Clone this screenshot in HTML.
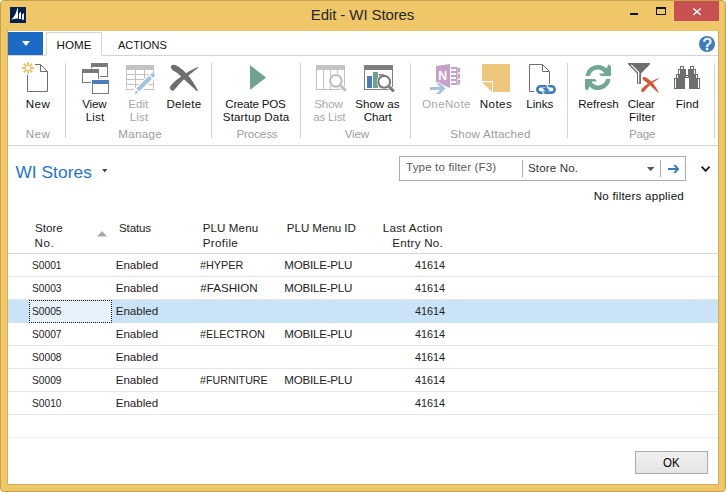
<!DOCTYPE html>
<html><head><meta charset="utf-8"><title>Edit - WI Stores</title>
<style>
html,body{margin:0;padding:0;}
body{width:726px;height:492px;overflow:hidden;background:#fff;font-family:"Liberation Sans",sans-serif;font-size:11.6px;color:#000;position:relative;}
.abs{position:absolute;}
#frame{position:absolute;left:0;top:0;width:724px;height:490px;border:1px solid #C7A24C;background:#EFC768;border-radius:4px;}
#client{position:absolute;left:7px;top:30px;width:710px;height:453px;background:#fff;border:1px solid #D2AE58;border-top-color:#E8C46A;}
.t{position:absolute;white-space:nowrap;line-height:14px;font-size:11.6px;}
.sep{position:absolute;top:63px;width:1px;height:75px;background:#D4D4D4;}
</style></head><body>
<div id="frame"></div>
<div class="abs" style="left:724px;top:3px;width:1px;height:485px;background:#DDB75C"></div>
<div id="client"></div>
<!-- title bar -->
<svg class="abs" style="left:10px;top:7px" width="16" height="16" viewBox="0 0 16 16"><rect width="16" height="16" fill="#00204F"/><path d="M1 12.8 C4 10.5 6.3 6 7.4 1 L7.9 1 L8.1 11.4 C5.5 11.4 3 12 1 12.8 Z M9 12 L9 6.7 L10.4 5.1 L11 5.1 L11 12 Z M12 12.8 L12 8 L13.3 6.3 L13.9 6.3 L13.9 12.8 Z" fill="#fff"/></svg>
<div class="abs" style="left:630px;top:13px;width:8px;height:2px;background:#111"></div>
<div class="abs" style="left:656px;top:7px;width:8px;height:5px;border:1px solid #111;border-top-width:2px"></div>
<div class="abs" style="left:674px;top:1px;width:45px;height:20px;background:#C75050"></div>
<svg class="abs" style="left:691px;top:6px" width="12" height="12" viewBox="0 0 12 12"><path d="M2.3 2.5 L9.7 9 M9.7 2.5 L2.3 9" stroke="#fff" stroke-width="1.5" fill="none"/></svg>
<!-- tabs -->
<div class="abs" style="left:8px;top:32px;width:35px;height:23px;background:#1B6AC6"></div>
<svg class="abs" style="left:22px;top:41px" width="8" height="5" viewBox="0 0 8 5"><path d="M0 0 L8 0 L4 5 Z" fill="#fff"/></svg>
<div class="abs" style="left:8px;top:55px;width:710px;height:1px;background:#D4D4D4"></div>
<div class="abs" style="left:46px;top:32px;width:54px;height:22px;border:1px solid #D4D4D4;border-bottom:1px solid #fff;background:#fff"></div>
<svg class="abs" style="left:699px;top:36px" width="16" height="16" viewBox="0 0 16 16"><circle cx="8" cy="8" r="8" fill="#3F7BBF"/><text x="8.1" y="13.5" text-anchor="middle" font-family="Liberation Sans, sans-serif" font-size="16" fill="#fff" stroke="#fff" stroke-width="0.5">?</text></svg>
<!-- ribbon -->
<div class="abs" style="left:8px;top:145px;width:710px;height:1px;background:#D4D4D4"></div>
<div class="sep" style="left:65px"></div>
<div class="sep" style="left:211px"></div>
<div class="sep" style="left:300px"></div>
<div class="sep" style="left:410px"></div>
<div class="sep" style="left:567px"></div>
<div class="sep" style="left:714px"></div>
<!-- ribbon icons -->
<svg class="abs" style="left:0;top:56px" width="726" height="44" viewBox="0 56 726 44" shape-rendering="auto">
<!-- New -->
<path d="M35 64.5 H40.5 L47.5 71.5 V91.5 H27.5 V75" fill="none" stroke="#6E6E6E" stroke-width="1"/>
<path d="M40.5 64.5 V71.5 H47.5" fill="none" stroke="#6E6E6E" stroke-width="1"/>
<g stroke="#EEC56F" stroke-width="2" fill="none">
<path d="M28 62 V66 M28 70 V74 M22 68 H26 M30 68 H34 M23.8 63.8 L26.6 66.6 M29.4 69.4 L32.2 72.2 M32.2 63.8 L29.4 66.6 M26.6 69.4 L23.8 72.2"/>
</g>
<!-- View List -->
<g fill="#7A7A7A">
<rect x="91" y="63" width="17" height="4"/><rect x="91" y="63" width="1" height="5.5"/><rect x="107" y="63" width="1" height="14"/><rect x="100" y="76" width="8" height="1"/>
<rect x="82" y="69" width="17" height="4"/><rect x="82" y="69" width="1" height="14"/><rect x="82" y="82" width="9" height="1"/><rect x="98" y="69" width="1" height="10"/>
<rect x="92" y="80" width="1" height="14"/><rect x="108" y="80" width="1" height="14"/><rect x="92" y="93" width="17" height="1"/>
</g>
<rect x="92" y="80" width="17" height="4" fill="#4A7EBB"/>
<!-- Edit List -->
<g fill="#C2C2C2">
<rect x="126" y="65" width="28" height="5"/>
<rect x="126" y="65" width="1" height="25"/><rect x="135" y="65" width="1" height="25"/><rect x="144" y="65" width="1" height="25"/><rect x="153" y="65" width="1" height="25"/>
<rect x="126" y="74" width="28" height="1"/><rect x="126" y="79" width="28" height="1"/><rect x="126" y="84" width="28" height="1"/><rect x="126" y="89" width="28" height="1"/>
</g>
<path d="M134.2 94.2 L152.5 75.5" stroke="#fff" stroke-width="7" fill="none"/>
<path d="M134.6 94 L136 90.2 L138.4 92.6 Z" fill="#A6C3E0"/>
<path d="M137.8 90 L150.6 77.2" stroke="#A6C3E0" stroke-width="4.2" fill="none"/>
<path d="M151.5 76.3 L153.8 74" stroke="#A6C3E0" stroke-width="4.2" fill="none"/>
<!-- Delete -->
<path d="M171 67.2 C170.6 64.6 174 64 177 65.8 C184 70 190.5 76.5 198 90.6 C197.6 91 197 91 196.4 90.7 L177 72.8 C174 71 171.3 70 171 67.2 Z" fill="#6E6E6E"/>
<path d="M170.1 88.6 C169.6 87.6 169.9 86.9 170.4 86.2 C173.4 82 177.6 78.7 182.8 75.5 C187.5 72.3 192.5 69.4 198.3 67.1 L198.3 68.1 C193.8 71 189.8 74.6 184.3 78.9 C180.3 82.6 177.6 86 174.2 89.9 C173 91.3 170.8 91 170.1 88.6 Z" fill="#6E6E6E"/>
<!-- Play -->
<path d="M250 65 L266 77.5 L250 90 Z" fill="#6FA391"/>
<!-- Show as List -->
<g fill="#C4C4C4">
<rect x="316" y="65" width="29" height="5"/>
<rect x="316" y="65" width="1" height="25"/><rect x="323" y="65" width="1" height="25"/><rect x="330" y="65" width="1" height="25"/><rect x="337" y="65" width="1" height="25"/><rect x="344" y="65" width="1" height="25"/>
<rect x="316" y="89" width="29" height="1"/>
</g>
<circle cx="335.8" cy="80.8" r="7.3" fill="#fff"/>
<path d="M340.5 85.5 L346.4 91.4" stroke="#fff" stroke-width="4.4"/>
<path d="M340.5 85.5 L345.8 90.8" stroke="#BEBEBE" stroke-width="2.9"/>
<circle cx="335.8" cy="80.8" r="5.8" fill="#fff" stroke="#BEBEBE" stroke-width="2.1"/>
<!-- Show as Chart -->
<rect x="364" y="65" width="29" height="5" fill="#7F7F7F"/>
<rect x="364.5" y="65.5" width="28" height="24" fill="none" stroke="#7F7F7F" stroke-width="1"/>
<rect x="367" y="76" width="5" height="12" fill="#4A7EBB"/>
<rect x="373" y="72" width="5" height="16" fill="#6FA391"/>
<rect x="379" y="74" width="5" height="14" fill="#7F7F7F"/>
<circle cx="384.2" cy="81.8" r="7.4" fill="#fff"/>
<path d="M389 86.6 L394.6 92.2" stroke="#fff" stroke-width="4.4"/>
<path d="M389 86.6 L393.9 91.5" stroke="#7A7A7A" stroke-width="2.9"/>
<circle cx="384.2" cy="81.8" r="5.9" fill="#fff" stroke="#7A7A7A" stroke-width="2.1"/>
<!-- OneNote -->
<path d="M436 66 L450 64 V88 L436 82 Z" fill="#C6A0C8"/>
<g fill="#C6A0C8">
<rect x="451" y="67" width="6" height="2"/><rect x="451" y="71" width="5" height="2"/><rect x="451" y="75" width="5" height="2"/><rect x="451" y="79" width="5" height="2"/><rect x="451" y="83" width="6" height="2"/>
<rect x="456" y="67" width="1.5" height="18"/>
<rect x="457.5" y="68" width="2.5" height="4.5"/><rect x="458" y="74" width="2" height="4.5"/><rect x="458" y="80" width="2" height="4.5"/>
</g>
<text x="442.6" y="79.7" text-anchor="middle" font-family="Liberation Sans, sans-serif" font-weight="bold" font-size="12.3" fill="#fff">N</text>
<path d="M429 87.5 H439.5 L435 83.2 H439.5 L446 88.5 L439.5 94 H435 L439.5 89.8 H429 Z" fill="#fff" stroke="#fff" stroke-width="1.5"/>
<path d="M430 87 H440 L436 83.2 H440 L445.5 88.5 L440 94 H436 L440 90 H430 Z" fill="#A6C3E0"/>
<!-- Notes -->
<path d="M482 64 H510 V92 H493 V81 H482 Z" fill="#EEC77D"/>
<path d="M482 82.2 H492 V92 Z" fill="#EEC77D"/>
<!-- Links -->
<path d="M534.5 91.5 H529.5 V64.5 H542.5 L549.5 71.5 V84" fill="none" stroke="#6E6E6E" stroke-width="1"/>
<path d="M542.5 64.5 V71.5 H549.5" fill="none" stroke="#6E6E6E" stroke-width="1"/>
<rect x="537.35" y="86.25" width="17.3" height="6.4" rx="3.2" ry="3.2" fill="#fff" stroke="#3F7CBF" stroke-width="2.7"/>
<path d="M542.6 88.3 L546.6 87.6 L549.8 90.6 L545.6 91.4 Z" fill="#3F7CBF"/>
<path d="M546.3 84.4 L549.5 89" stroke="#fff" stroke-width="1.1"/>
<path d="M541.9 91 L544.6 94.6" stroke="#fff" stroke-width="1.1"/>
<!-- Refresh -->
<g fill="#72A794">
<path d="M585.6 76 A12.4 12.4 0 0 1 606.6 68.6 L608.5 64.3 L611 66.5 V76 H601 L599 73.4 H603.6 L604.2 72.4 A8.3 8.3 0 0 0 589.9 76 Z"/>
<path d="M610.4 79 A12.4 12.4 0 0 1 589.4 86.4 L587.5 90.7 L585 88.5 V79 H595 L597 81.6 H592.4 L591.8 82.6 A8.3 8.3 0 0 0 606.1 79 Z"/>
</g>
<!-- Clear filter -->
<path d="M628 63 H650 V64.3 L641 73.6 V83.8 H637 V73.6 L628 64.3 Z" fill="#6E6E6E"/>
<path d="M631.2 64.8 L638.6 72.2 V82.8" fill="none" stroke="#fff" stroke-width="1.2"/>
<path d="M642.5 78.6 C642.3 76.8 644.6 76.6 646.6 77.8 C651.6 81 655.6 86 658.7 92.4 C658.3 92.7 657.8 92.6 657.4 92.3 C654 88.8 650.6 85.4 646.6 82.4 C644.4 80.8 642.7 80.2 642.5 78.6 Z" fill="#D4593B"/>
<path d="M641.4 91 C641 90 641.4 89.4 642 88.6 C646 84.4 651.6 80.6 658.6 78 L658.6 78.8 C654.6 81.2 651.2 84 647.8 87.2 C645.8 89.2 644.6 91 643.4 92 C642.6 92.6 641.8 92.2 641.4 91 Z" fill="#D4593B"/>
<!-- Find -->
<g fill="#6E6E6E">
<rect x="680" y="66" width="4" height="3"/><rect x="678" y="69" width="8" height="5"/><rect x="676" y="74" width="10" height="4"/><rect x="674" y="78" width="11" height="11"/>
<rect x="690" y="66" width="4" height="3"/><rect x="688" y="69" width="8" height="5"/><rect x="688" y="74" width="10" height="4"/><rect x="689" y="78" width="11" height="11"/>
<rect x="686" y="75" width="2" height="3"/>
</g>
<g fill="#fff">
<rect x="681" y="67" width="2" height="2"/><rect x="679" y="70" width="1" height="4"/><rect x="677" y="75" width="1" height="3"/><rect x="675" y="79" width="1" height="9"/>
<rect x="691" y="67" width="2" height="2"/><rect x="694" y="70" width="1" height="4"/><rect x="696" y="75" width="1" height="3"/><rect x="698" y="79" width="1" height="9"/>
<rect x="686" y="76" width="2" height="1"/>
</g>
</svg>

<!-- page title & filter -->
<svg class="abs" style="left:101.5px;top:169px" width="5.5" height="3.5" viewBox="0 0 6 4"><path d="M0 0 L6 0 L3 4 Z" fill="#444"/></svg>
<div class="abs" style="left:399px;top:156px;width:285px;height:23px;border:1px solid #ABABAB;background:#fff"></div>
<div class="abs" style="left:522px;top:160px;width:1px;height:17px;background:#ABABAB"></div>
<svg class="abs" style="left:647px;top:167px" width="7.4" height="4.2" viewBox="0 0 8 4.5"><path d="M0 0 L8 0 L4 4.5 Z" fill="#555"/></svg>
<div class="abs" style="left:660px;top:160px;width:1px;height:17px;background:#ABABAB"></div>
<svg class="abs" style="left:667px;top:164px" width="13" height="10" viewBox="0 0 13 10"><path d="M1 5 L10.5 5" stroke="#3B78C0" stroke-width="2" fill="none"/><path d="M6.2 1.1 L8.8 1.1 L12.4 5 L8.8 8.9 L6.2 8.9 L9.8 5 Z" fill="#3B78C0"/></svg>
<svg class="abs" style="left:700px;top:165px" width="11" height="8" viewBox="0 0 11 8"><path d="M1.6 1.6 L5.6 5.8 L9.6 1.6" stroke="#222" stroke-width="1.9" fill="none"/></svg>
<!-- table -->
<svg class="abs" style="left:96.5px;top:231px" width="10" height="5.5" viewBox="0 0 10 5.5"><path d="M0 5.5 L5 0 L10 5.5 Z" fill="#A8A8A8"/></svg>
<div class="abs" style="left:8px;top:253px;width:710px;height:1px;background:#D6D6D6"></div>
<div class="abs" style="left:8px;top:276px;width:710px;height:1px;background:#E6E6E6"></div>
<div class="abs" style="left:8px;top:299px;width:710px;height:1px;background:#E6E6E6"></div>
<div class="abs" style="left:8px;top:300px;width:710px;height:23px;background:#CBE3F7"></div>
<div class="abs" style="left:29px;top:300px;width:81px;height:21px;border:1px dotted #1a1a1a;background:#E6F1FB"></div>
<div class="abs" style="left:8px;top:345px;width:710px;height:1px;background:#E6E6E6"></div>
<div class="abs" style="left:8px;top:368px;width:710px;height:1px;background:#E6E6E6"></div>
<div class="abs" style="left:8px;top:391px;width:710px;height:1px;background:#E6E6E6"></div>
<div class="abs" style="left:8px;top:414px;width:710px;height:1px;background:#E6E6E6"></div>
<div class="abs" style="left:8px;top:437px;width:710px;height:1px;background:#EFEFEF"></div>
<!-- OK button -->
<div class="abs" style="left:635px;top:451px;width:71px;height:21px;border:1px solid #ACACAC;background:linear-gradient(#F0F0F0,#E5E5E5)"></div>
<!-- text -->
<div class="t" style="left:310.85px;top:5px;color:#262626;font-size:15px;line-height:20px;letter-spacing:-0.1px">Edit - WI Stores</div>
<div class="t" style="left:56.6px;top:38px;color:#111;letter-spacing:0.04px">HOME</div>
<div class="t" style="left:118.1px;top:38px;color:#111;transform:scaleX(0.947);transform-origin:0 0">ACTIONS</div>
<div class="t" style="left:25.8px;top:97px;color:#111;letter-spacing:0.41px">New</div>
<div class="t" style="left:82.2px;top:97px;color:#111;letter-spacing:-0.12px">View</div>
<div class="t" style="left:85.7px;top:110px;color:#111;letter-spacing:0.17px">List</div>
<div class="t" style="left:128.2px;top:97px;color:#A8A8A8;letter-spacing:0.04px">Edit</div>
<div class="t" style="left:129.8px;top:110px;color:#A8A8A8;letter-spacing:0.1px">List</div>
<div class="t" style="left:166.5px;top:97px;color:#111;letter-spacing:0.24px">Delete</div>
<div class="t" style="left:225.3px;top:97px;color:#111;letter-spacing:-0.22px">Create POS</div>
<div class="t" style="left:222.8px;top:110px;color:#111;letter-spacing:0.12px">Startup Data</div>
<div class="t" style="left:314.2px;top:97px;color:#A8A8A8;letter-spacing:-0.1px">Show</div>
<div class="t" style="left:313.2px;top:110px;color:#A8A8A8;letter-spacing:-0.21px">as List</div>
<div class="t" style="left:355.3px;top:97px;color:#111;letter-spacing:-0.04px">Show as</div>
<div class="t" style="left:363.7px;top:110px;color:#111;letter-spacing:-0.06px">Chart</div>
<div class="t" style="left:422.0px;top:97px;color:#A8A8A8;letter-spacing:0.33px">OneNote</div>
<div class="t" style="left:479.8px;top:97px;color:#111;letter-spacing:0.4px">Notes</div>
<div class="t" style="left:526.2px;top:97px;color:#111;letter-spacing:0.04px">Links</div>
<div class="t" style="left:578.2px;top:97px;color:#111">Refresh</div>
<div class="t" style="left:627.8px;top:97px;color:#111;letter-spacing:-0.17px">Clear</div>
<div class="t" style="left:629.0px;top:110px;color:#111;letter-spacing:0.1px">Filter</div>
<div class="t" style="left:675.7px;top:97px;color:#111;letter-spacing:0.15px">Find</div>
<div class="t" style="left:25.8px;top:127px;color:#9C9C9C;letter-spacing:0.41px">New</div>
<div class="t" style="left:118.2px;top:127px;color:#9C9C9C;letter-spacing:0.33px">Manage</div>
<div class="t" style="left:236.5px;top:127px;color:#9C9C9C;letter-spacing:-0.12px">Process</div>
<div class="t" style="left:344.7px;top:127px;color:#9C9C9C;letter-spacing:-0.17px">View</div>
<div class="t" style="left:450.3px;top:127px;color:#9C9C9C;letter-spacing:0.23px">Show Attached</div>
<div class="t" style="left:629.0px;top:127px;color:#9C9C9C;letter-spacing:-0.17px">Page</div>
<div class="t" style="left:15.45px;top:161px;color:#2273D2;font-size:17.3px;line-height:22px;letter-spacing:0.06px">WI Stores</div>
<div class="t" style="left:406.05px;top:160px;color:#5a5a5a;letter-spacing:0.14px">Type to filter (F3)</div>
<div class="t" style="left:528.0px;top:161px;color:#333;letter-spacing:0.13px">Store No.</div>
<div class="t" style="left:593.7px;top:189px;color:#111;letter-spacing:0.22px">No filters applied</div>
<div class="t" style="left:35.0px;top:221px;color:#222;letter-spacing:0.02px">Store</div>
<div class="t" style="left:34.5px;top:236px;color:#222;letter-spacing:0.67px">No.</div>
<div class="t" style="left:119.0px;top:221px;color:#222;letter-spacing:-0.16px">Status</div>
<div class="t" style="left:202.7px;top:221px;color:#222;letter-spacing:0.1px">PLU Menu</div>
<div class="t" style="left:202.7px;top:236px;color:#222;letter-spacing:0.37px">Profile</div>
<div class="t" style="left:286.8px;top:221px;color:#222;letter-spacing:-0.05px">PLU Menu ID</div>
<div class="t" style="left:382.7px;top:221px;color:#222;letter-spacing:0.3px">Last Action</div>
<div class="t" style="left:392.3px;top:236px;color:#222;letter-spacing:0.27px">Entry No.</div>
<div class="t" style="left:32.16px;top:258px;color:#222;transform:scaleX(0.88);transform-origin:0 0">S0001</div>
<div class="t" style="left:115.7px;top:258px;color:#222">Enabled</div>
<div class="t" style="left:200.3px;top:258px;color:#222;transform:scaleX(0.933);transform-origin:0 0">#HYPER</div>
<div class="t" style="left:284.3px;top:258px;color:#222;letter-spacing:-0.23px">MOBILE-PLU</div>
<div class="t" style="left:415.07px;top:258px;color:#222;transform:scaleX(0.935);transform-origin:0 0">41614</div>
<div class="t" style="left:32.16px;top:281px;color:#222;transform:scaleX(0.88);transform-origin:0 0">S0003</div>
<div class="t" style="left:115.7px;top:281px;color:#222">Enabled</div>
<div class="t" style="left:200.3px;top:281px;color:#222">#FASHION</div>
<div class="t" style="left:284.3px;top:281px;color:#222;letter-spacing:-0.23px">MOBILE-PLU</div>
<div class="t" style="left:415.07px;top:281px;color:#222;transform:scaleX(0.935);transform-origin:0 0">41614</div>
<div class="t" style="left:32.16px;top:304px;color:#222;transform:scaleX(0.88);transform-origin:0 0">S0005</div>
<div class="t" style="left:115.7px;top:304px;color:#222">Enabled</div>
<div class="t" style="left:415.07px;top:304px;color:#222;transform:scaleX(0.935);transform-origin:0 0">41614</div>
<div class="t" style="left:32.16px;top:327px;color:#222;transform:scaleX(0.88);transform-origin:0 0">S0007</div>
<div class="t" style="left:115.7px;top:327px;color:#222">Enabled</div>
<div class="t" style="left:200.3px;top:327px;color:#222;transform:scaleX(0.932);transform-origin:0 0">#ELECTRON</div>
<div class="t" style="left:284.3px;top:327px;color:#222;letter-spacing:-0.23px">MOBILE-PLU</div>
<div class="t" style="left:415.07px;top:327px;color:#222;transform:scaleX(0.935);transform-origin:0 0">41614</div>
<div class="t" style="left:32.16px;top:350px;color:#222;transform:scaleX(0.88);transform-origin:0 0">S0008</div>
<div class="t" style="left:115.7px;top:350px;color:#222">Enabled</div>
<div class="t" style="left:415.07px;top:350px;color:#222;transform:scaleX(0.935);transform-origin:0 0">41614</div>
<div class="t" style="left:32.16px;top:373px;color:#222;transform:scaleX(0.88);transform-origin:0 0">S0009</div>
<div class="t" style="left:115.7px;top:373px;color:#222">Enabled</div>
<div class="t" style="left:200.3px;top:373px;color:#222;transform:scaleX(0.922);transform-origin:0 0">#FURNITURE</div>
<div class="t" style="left:284.3px;top:373px;color:#222;letter-spacing:-0.23px">MOBILE-PLU</div>
<div class="t" style="left:415.07px;top:373px;color:#222;transform:scaleX(0.935);transform-origin:0 0">41614</div>
<div class="t" style="left:32.16px;top:396px;color:#222;transform:scaleX(0.88);transform-origin:0 0">S0010</div>
<div class="t" style="left:115.7px;top:396px;color:#222">Enabled</div>
<div class="t" style="left:415.07px;top:396px;color:#222;transform:scaleX(0.935);transform-origin:0 0">41614</div>
<div class="t" style="left:663px;top:456px;color:#000;font-size:12.5px;transform:scaleX(0.92);transform-origin:0 0">OK</div>
</body></html>
